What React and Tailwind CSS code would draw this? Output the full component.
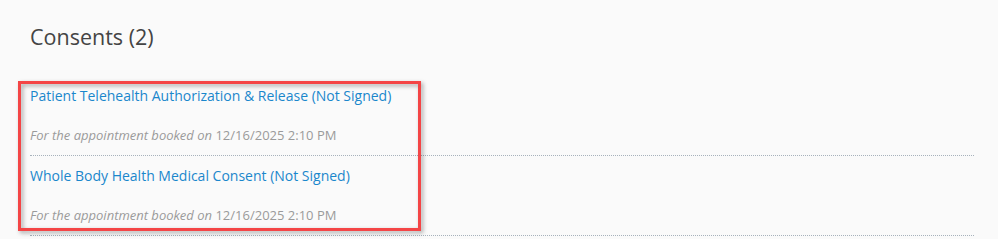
const consents = [
  {
    title: "Patient Telehealth Authorization & Release (Not Signed)",
    date: "12/16/2025 2:10 PM",
  },
  {
    title: "Whole Body Health Medical Consent (Not Signed)",
    date: "12/16/2025 2:10 PM",
  },
];

const ConsentItem = ({ title, date }) => (
  <div className="pt-[10px] pb-[11px] border-b border-dotted border-[#a7b2bc]">
    <a href="#" className="block text-[14px] leading-[20px] text-[#1a87cc]">
      {title}
    </a>
    <p className="mt-[20px] text-[13px] leading-[18px] text-[#9a9a9a]">
      <span className="italic">For the appointment booked on</span> {date}
    </p>
  </div>
);

export default function App() {
  return (
    <div
      className="relative min-h-[239px] w-full bg-[#fafafa] pl-[30px] pr-[24px] pt-[23px]"
      style={{ fontFamily: '"Open Sans", "Liberation Sans", sans-serif' }}
    >
      <h2 className="text-[21.5px] leading-[28px] text-[#444] mb-[25px]">
        Consents ({consents.length})
      </h2>
      <div>
        {consents.map((c) => (
          <ConsentItem key={c.title} title={c.title} date={c.date} />
        ))}
      </div>
      {/* highlight annotation */}
      <div className="absolute left-[18px] top-[81px] w-[403px] h-[150px] border-[3px] border-[#f44546] [filter:drop-shadow(2px_2px_2px_rgba(0,0,0,0.35))] pointer-events-none" />
    </div>
  );
}
